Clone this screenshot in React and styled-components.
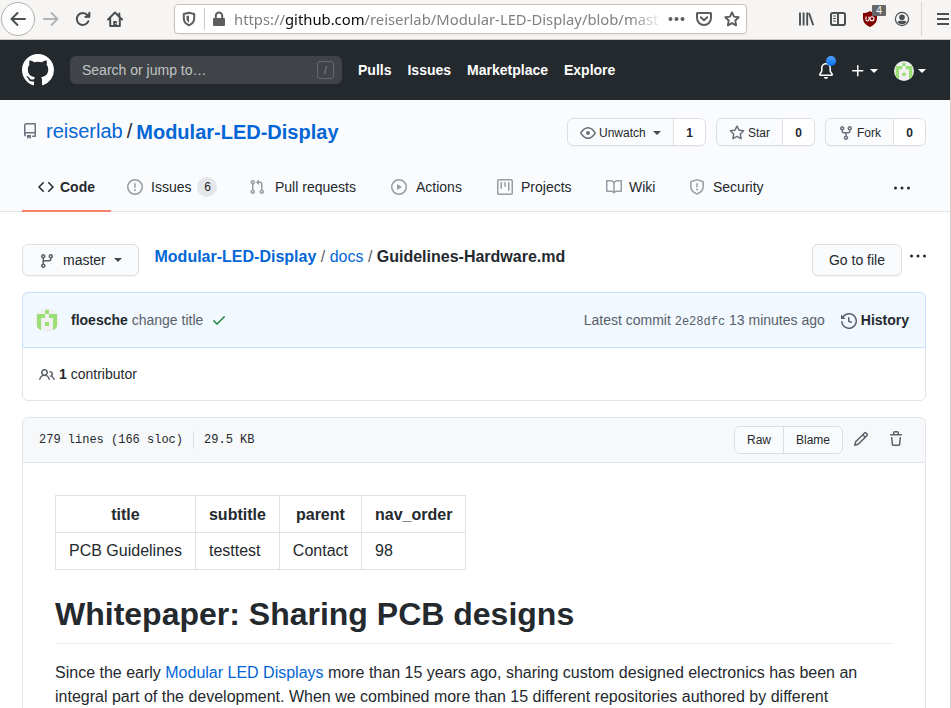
import React from "react";
import styled, { createGlobalStyle } from "styled-components";

const GlobalStyle = createGlobalStyle`
  * { box-sizing: border-box; }
  html, body { margin: 0; padding: 0; background: #fff; overflow: hidden; }
  body {
    font-family: "Liberation Sans", Arial, Helvetica, sans-serif;
    font-size: 14px;
    line-height: 21px;
    color: #24292e;
  }
  svg { display: block; flex: none; }
`;

const paths = {
  github:
    "M8 0C3.58 0 0 3.58 0 8c0 3.54 2.29 6.53 5.47 7.59.4.07.55-.17.55-.38 0-.19-.01-.82-.01-1.49-2.01.37-2.53-.49-2.69-.94-.09-.23-.48-.94-.82-1.13-.28-.15-.68-.52-.01-.53.63-.01 1.08.58 1.23.82.72 1.21 1.87.87 2.33.66.07-.52.28-.87.51-1.07-1.78-.2-3.64-.89-3.64-3.95 0-.87.31-1.59.82-2.15-.08-.2-.36-1.02.08-2.12 0 0 .67-.21 2.2.82.64-.18 1.32-.27 2-.27.68 0 1.36.09 2 .27 1.53-1.04 2.2-.82 2.2-.82.44 1.1.16 1.92.08 2.12.51.56.82 1.27.82 2.15 0 3.07-1.87 3.75-3.65 3.95.29.25.54.73.54 1.48 0 1.07-.01 1.93-.01 2.2 0 .21.15.46.55.38A8.013 8.013 0 0016 8c0-4.42-3.58-8-8-8z",
  repo:
    "M2 2.5A2.5 2.5 0 014.5 0h8.75a.75.75 0 01.75.75v12.5a.75.75 0 01-.75.75h-2.5a.75.75 0 110-1.5h1.75v-2h-8a1 1 0 00-.714 1.7.75.75 0 01-1.072 1.05A2.495 2.495 0 012 11.5v-9zm10.5-1V9h-8c-.356 0-.694.074-1 .208V2.5a1 1 0 011-1h8zM5 12.25v3.25a.25.25 0 00.4.2l1.45-1.087a.25.25 0 01.3 0L8.6 15.7a.25.25 0 00.4-.2v-3.25a.25.25 0 00-.25-.25h-3.5a.25.25 0 00-.25.25z",
  code:
    "M4.72 3.22a.75.75 0 011.06 1.06L2.06 8l3.72 3.72a.75.75 0 11-1.06 1.06L.47 8.53a.75.75 0 010-1.06l4.25-4.25zm6.56 0a.75.75 0 10-1.06 1.06L13.94 8l-3.72 3.72a.75.75 0 101.06 1.06l4.25-4.25a.75.75 0 000-1.06l-4.25-4.25z",
  issue:
    "M8 1.5a6.5 6.5 0 100 13 6.5 6.5 0 000-13zM0 8a8 8 0 1116 0A8 8 0 010 8zm9 3a1 1 0 11-2 0 1 1 0 012 0zm-.25-6.25a.75.75 0 00-1.5 0v3.5a.75.75 0 001.5 0v-3.5z",
  pull:
    "M7.177 3.073L9.573.677A.25.25 0 0110 .854v4.792a.25.25 0 01-.427.177L7.177 3.427a.25.25 0 010-.354zM3.75 2.5a.75.75 0 100 1.5.75.75 0 000-1.5zm-2.25.75a2.25 2.25 0 113 2.122v5.256a2.251 2.251 0 11-1.5 0V5.372A2.25 2.25 0 011.5 3.25zM11 2.5h-1V4h1a1 1 0 011 1v5.628a2.251 2.251 0 101.5 0V5A2.5 2.5 0 0011 2.5zm1 10.25a.75.75 0 111.5 0 .75.75 0 01-1.5 0zM3.75 12a.75.75 0 100 1.5.75.75 0 000-1.5z",
  play:
    "M1.5 8a6.5 6.5 0 1113 0 6.5 6.5 0 01-13 0zM8 0a8 8 0 100 16A8 8 0 008 0zM6.379 5.227A.25.25 0 006 5.442v5.117a.25.25 0 00.379.214l4.264-2.559a.25.25 0 000-.428L6.379 5.227z",
  project:
    "M1.75 0A1.75 1.75 0 000 1.75v12.5C0 15.216.784 16 1.75 16h12.5A1.75 1.75 0 0016 14.25V1.75A1.75 1.75 0 0014.25 0H1.75zM1.5 1.75a.25.25 0 01.25-.25h12.5a.25.25 0 01.25.25v12.5a.25.25 0 01-.25.25H1.75a.25.25 0 01-.25-.25V1.75zM11.75 3a.75.75 0 00-.75.75v7.5a.75.75 0 001.5 0v-7.5a.75.75 0 00-.75-.75zm-8.25.75a.75.75 0 011.5 0v5.5a.75.75 0 01-1.5 0v-5.5zM8 3a.75.75 0 00-.75.75v3.5a.75.75 0 001.5 0v-3.5A.75.75 0 008 3z",
  book:
    "M0 1.75A.75.75 0 01.75 1h4.253c1.227 0 2.317.59 3 1.501A3.744 3.744 0 0111.006 1h4.245a.75.75 0 01.75.75v10.5a.75.75 0 01-.75.75h-4.507a2.25 2.25 0 00-1.591.659l-.622.621a.75.75 0 01-1.06 0l-.622-.621A2.25 2.25 0 005.258 13H.75a.75.75 0 01-.75-.75V1.75zm8.755 3a2.25 2.25 0 012.25-2.25H14.5v9h-3.757c-.71 0-1.4.201-1.992.572l.004-7.322zm-1.504 7.324l.004-5.073-.002-2.253A2.25 2.25 0 005.003 2.5H1.5v9h3.757a3.75 3.75 0 011.994.574z",
  shield:
    "M7.467.133a1.75 1.75 0 011.066 0l5.25 1.68A1.75 1.75 0 0115 3.48V7c0 1.566-.32 3.182-1.303 4.682-.983 1.498-2.585 2.813-5.032 3.855a1.7 1.7 0 01-1.33 0c-2.447-1.042-4.049-2.357-5.032-3.855C1.32 10.182 1 8.566 1 7V3.48a1.75 1.75 0 011.217-1.667l5.25-1.68zm.61 1.429a.25.25 0 00-.153 0l-5.25 1.68a.25.25 0 00-.174.238V7c0 1.358.275 2.666 1.057 3.86.784 1.194 2.121 2.34 4.366 3.297a.2.2 0 00.154 0c2.245-.956 3.582-2.104 4.366-3.298C13.225 9.666 13.5 8.36 13.5 7V3.48a.25.25 0 00-.174-.237l-5.25-1.68zM9 10.5a1 1 0 11-2 0 1 1 0 012 0zm-.25-5.75a.75.75 0 10-1.5 0v3a.75.75 0 001.5 0v-3z",
  eye:
    "M1.679 7.932c.412-.621 1.242-1.75 2.366-2.717C5.175 4.242 6.527 3.5 8 3.5c1.473 0 2.824.742 3.955 1.715 1.124.967 1.954 2.096 2.366 2.717a.119.119 0 010 .136c-.412.621-1.242 1.75-2.366 2.717C10.825 11.758 9.473 12.5 8 12.5c-1.473 0-2.824-.742-3.955-1.715C2.92 9.818 2.09 8.69 1.679 8.068a.119.119 0 010-.136zM8 2c-1.981 0-3.67.992-4.933 2.078C1.797 5.169.88 6.423.43 7.1a1.619 1.619 0 000 1.798c.45.678 1.367 1.932 2.637 3.024C4.329 13.008 6.019 14 8 14c1.981 0 3.67-.992 4.933-2.078 1.27-1.091 2.187-2.345 2.637-3.023a1.619 1.619 0 000-1.798c-.45-.678-1.367-1.932-2.637-3.023C11.671 2.992 9.981 2 8 2zm0 8a2 2 0 100-4 2 2 0 000 4z",
  star:
    "M8 .25a.75.75 0 01.673.418l1.882 3.815 4.21.612a.75.75 0 01.416 1.279l-3.046 2.97.719 4.192a.75.75 0 01-1.088.791L8 12.347l-3.766 1.98a.75.75 0 01-1.088-.79l.72-4.194L.818 6.374a.75.75 0 01.416-1.28l4.21-.611L7.327.668A.75.75 0 018 .25zm0 2.445L6.615 5.5a.75.75 0 01-.564.41l-3.097.45 2.24 2.184a.75.75 0 01.216.664l-.528 3.084 2.769-1.456a.75.75 0 01.698 0l2.77 1.456-.53-3.084a.75.75 0 01.216-.664l2.24-2.183-3.096-.45a.75.75 0 01-.564-.41L8 2.694v.001z",
  fork:
    "M5 3.25a.75.75 0 11-1.5 0 .75.75 0 011.5 0zm0 2.122a2.25 2.25 0 10-1.5 0v.878A2.25 2.25 0 005.75 8.5h1.5v2.128a2.251 2.251 0 101.5 0V8.5h1.5a2.25 2.25 0 002.25-2.25v-.878a2.25 2.25 0 10-1.5 0v.878a.75.75 0 01-.75.75h-4.5A.75.75 0 015 6.25v-.878zm3.75 7.378a.75.75 0 11-1.5 0 .75.75 0 011.5 0zm3-8.75a.75.75 0 100-1.5.75.75 0 000 1.5z",
  branch:
    "M11.75 2.5a.75.75 0 100 1.5.75.75 0 000-1.5zm-2.25.75a2.25 2.25 0 113 2.122V6A2.5 2.5 0 0110 8.5H6a1 1 0 00-1 1v1.128a2.251 2.251 0 11-1.5 0V5.372a2.25 2.25 0 111.5 0v1.836A2.492 2.492 0 016 7h4a1 1 0 001-1v-.628A2.25 2.25 0 019.5 3.25zM4.25 12a.75.75 0 100 1.5.75.75 0 000-1.5zM3.5 3.25a.75.75 0 111.5 0 .75.75 0 01-1.5 0z",
  history:
    "M1.643 3.143L.427 1.927A.25.25 0 000 2.104V5.75c0 .138.112.25.25.25h3.646a.25.25 0 00.177-.427L2.715 4.215a6.5 6.5 0 11-1.18 4.458.75.75 0 10-1.493.154 8.001 8.001 0 101.6-5.684zM7.75 4a.75.75 0 01.75.75v2.992l2.028.812a.75.75 0 01-.557 1.392l-2.5-1A.75.75 0 017 8.25v-3.5A.75.75 0 017.75 4z",
  check:
    "M13.78 4.22a.75.75 0 010 1.06l-7.25 7.25a.75.75 0 01-1.06 0L2.22 9.28a.75.75 0 011.06-1.06L6 10.94l6.72-6.72a.75.75 0 011.06 0z",
  people:
    "M5.5 3.5a2 2 0 100 4 2 2 0 000-4zM2 5.5a3.5 3.5 0 115.898 2.549 5.507 5.507 0 013.034 4.084.75.75 0 11-1.482.235 4.001 4.001 0 00-7.9 0 .75.75 0 01-1.482-.236A5.507 5.507 0 013.102 8.05 3.49 3.49 0 012 5.5zM11 4a.75.75 0 100 1.5 1.5 1.5 0 01.666 2.844.75.75 0 00-.416.672v.352a.75.75 0 00.574.73c1.2.289 2.162 1.2 2.522 2.372a.75.75 0 101.434-.44 5.01 5.01 0 00-2.56-3.012A3 3 0 0011 4z",
  pencil:
    "M11.013 1.427a1.75 1.75 0 012.474 0l1.086 1.086a1.75 1.75 0 010 2.474l-8.61 8.61c-.21.21-.47.364-.756.445l-3.251.93a.75.75 0 01-.927-.928l.929-3.25a1.75 1.75 0 01.445-.758l8.61-8.61zm1.414 1.06a.25.25 0 00-.354 0L10.811 3.75l1.439 1.44 1.263-1.263a.25.25 0 000-.354l-1.086-1.086zM11.189 6.25L9.75 4.81l-6.286 6.287a.25.25 0 00-.064.108l-.558 1.953 1.953-.558a.249.249 0 00.108-.064l6.286-6.286z",
  trash:
    "M6.5 1.75a.25.25 0 01.25-.25h2.5a.25.25 0 01.25.25V3h-3V1.75zm4.5 0V3h2.25a.75.75 0 010 1.5H2.75a.75.75 0 010-1.5H5V1.75C5 .784 5.784 0 6.75 0h2.5C10.216 0 11 .784 11 1.75zM4.496 6.675a.75.75 0 10-1.492.15l.66 6.6A1.75 1.75 0 005.405 15h5.19c.9 0 1.652-.681 1.741-1.576l.66-6.6a.75.75 0 00-1.492-.149l-.66 6.6a.25.25 0 01-.249.225h-5.19a.25.25 0 01-.249-.225l-.66-6.6z",
  bell:
    "M8 16a2 2 0 001.985-1.75c.017-.137-.097-.25-.235-.25h-3.5c-.138 0-.252.113-.235.25A2 2 0 008 16zM8 1.5A3.5 3.5 0 004.5 5v2.947c0 .346-.102.683-.294.97l-1.703 2.556a.018.018 0 00-.003.01l.001.006c0 .002.002.004.004.006a.017.017 0 00.006.004l.007.001h10.964l.007-.001a.016.016 0 00.006-.004.016.016 0 00.004-.006l.001-.007a.017.017 0 00-.003-.01l-1.703-2.554a1.75 1.75 0 01-.294-.97V5A3.5 3.5 0 008 1.5zM3 5a5 5 0 0110 0v2.947c0 .05.015.098.042.139l1.703 2.555A1.518 1.518 0 0113.482 13H2.518a1.518 1.518 0 01-1.263-2.36l1.703-2.554A.25.25 0 003 7.947V5z",
  plus:
    "M7.75 2a.75.75 0 01.75.75V7h4.25a.75.75 0 110 1.5H8.5v4.25a.75.75 0 11-1.5 0V8.5H2.75a.75.75 0 010-1.5H7V2.75A.75.75 0 017.75 2z",
};

const Octicon = ({ name, size = 16, color = "currentColor" }) => (
  <svg width={size} height={size} viewBox="0 0 16 16" fill={color}>
    <path fillRule="evenodd" clipRule="evenodd" d={paths[name]} />
  </svg>
);

const Dots = ({ color = "#24292e" }) => (
  <svg width="16" height="16" viewBox="0 0 16 16" fill={color}>
    <circle cx="1.5" cy="8" r="1.5" />
    <circle cx="8" cy="8" r="1.5" />
    <circle cx="14.5" cy="8" r="1.5" />
  </svg>
);

const Caret = styled.span`
  flex: none;
  width: 0;
  height: 0;
  border: 4px solid transparent;
  border-top-color: ${(p) => p.$color || "#444a50"};
  border-bottom: 0;
  margin-left: ${(p) => p.$gap || 0}px;
`;

const Identicon = ({ size }) => (
  <svg width={size} height={size} viewBox="0 0 24 24">
    <defs>
      <clipPath id={`round${size}`}>
        <circle cx="12" cy="12" r="12" />
      </clipPath>
    </defs>
    <g clipPath={`url(#round${size})`}>
      <rect width="24" height="24" fill="#f0f0f0" />
      <path
        fill="#9ade76"
        d="M10 2h4v4h-4zM2 6h8v4H6v12H2zM14 6h8v16h-4V10h-4zM10 14h4v4h-4z"
      />
    </g>
  </svg>
);

/* ---------- browser chrome ---------- */

const Window = styled.div`
  width: 951px;
  height: 708px;
  display: flex;
  flex-direction: column;
  overflow: hidden;
`;

const BrowserBar = styled.div`
  flex: none;
  display: flex;
  align-items: center;
  height: 40px;
  padding-bottom: 2px;
  background: #f6f5f4;
  border-bottom: 1px solid #cdc7c2;
  color: #4a4f52;
`;

const BackButton = styled.div`
  flex: none;
  display: flex;
  align-items: center;
  justify-content: center;
  width: 34px;
  height: 34px;
  margin-left: 1px;
  border: 1px solid #aeaeac;
  border-radius: 50%;
  background: #fdfdfd;
`;

const BarIcon = styled.div`
  flex: none;
  display: flex;
  position: relative;
  margin-left: ${(p) => p.$gap}px;
  color: ${(p) => p.$color || "inherit"};
`;

const UrlBar = styled.div`
  flex: none;
  display: flex;
  align-items: center;
  width: 573px;
  height: 30px;
  margin-left: 51px;
  border: 1px solid #c9c2bc;
  border-radius: 4px;
  background: #fff;
  color: #5d5d5d;
  box-shadow: 0 1px 2px rgba(0, 0, 0, 0.06);
`;

const UrlDivider = styled.div`
  width: 1px;
  height: 22px;
  margin: 0 8px 0 7px;
  background: #c9c9c9;
`;

const Url = styled.div`
  width: 425px;
  margin-left: 9px;
  white-space: nowrap;
  font: 14.8px/24px "Noto Sans", sans-serif;
  color: #808080;
  mask-image: linear-gradient(to right, #000 396px, transparent 430px);
  b { font-weight: 400; color: #0c0c0d; }
`;

const BlockBadge = styled.span`
  position: absolute;
  left: 9px;
  top: -6px;
  width: 14px;
  height: 11px;
  border-radius: 1px;
  background: #666;
  color: #fff;
  font: 10px/11px "Noto Sans", sans-serif;
  text-align: center;
`;

const BarDivider = styled.div`
  width: 1px;
  height: 34px;
  margin-left: 11px;
  background: #d9d6d2;
`;

const stroke = {
  fill: "none",
  stroke: "currentColor",
  strokeWidth: 2,
  strokeLinecap: "round",
  strokeLinejoin: "round",
};

const Browser = () => (
  <BrowserBar>
    <BackButton>
      <svg width="16" height="16" viewBox="0 0 16 16" {...stroke}>
        <path d="M15 8H1.500M7.500 2l-6 6 6 6" />
      </svg>
    </BackButton>
    <BarIcon $gap={8} $color="#b3b5b5">
      <svg width="16" height="16" viewBox="0 0 16 16" {...stroke}>
        <path d="M1 8h13.500M8.500 2l6 6-6 6" />
      </svg>
    </BarIcon>
    <BarIcon $gap={16}>
      <svg width="16" height="16" viewBox="0 0 16 16" {...stroke}>
        <path d="M13.400 10.200A6 6 0 1 1 12.500 4.200" />
        <path d="M15 1v5.500H9.500z" fill="currentColor" stroke="none" />
        <path d="M14.400 1.800v4h-4" />
      </svg>
    </BarIcon>
    <BarIcon $gap={16}>
      <svg width="16" height="16" viewBox="0 0 16 16" {...stroke}>
        <path d="M1 8.500l7-7 7 7M3.200 7.500V15h9.600V7.500" />
        <path d="M6.200 15v-5h3.600v5z" fill="currentColor" stroke="none" />
        <path d="M12.300 2.500v3" />
        <circle cx="8.700" cy="12.500" r=".6" fill="#fff" stroke="none" />
      </svg>
    </BarIcon>
    <UrlBar>
      <BarIcon $gap={6}>
        <svg width="16" height="16" viewBox="0 0 16 16" {...stroke}>
          <path d="M8 1.800L13.200 3v4.500c0 3-2 5.500-5.200 6.800-3.200-1.300-5.200-3.800-5.200-6.800V3z" />
          <path d="M8 4.500v7c-1.700-1-2.500-2.400-2.500-4V5z" fill="currentColor" stroke="none" />
        </svg>
      </BarIcon>
      <UrlDivider />
      <svg width="12" height="16" viewBox="0 0 12 16">
        <rect x="0" y="7" width="12" height="8" rx="1.200" fill="currentColor" />
        <path d="M2.800 8V4.800a3.200 3.200 0 016.400 0V8" {...stroke} />
      </svg>
      <Url>
        https://<b>github.com</b>/reiserlab/Modular-LED-Display/blob/maste
      </Url>
      <BarIcon $gap={9}>
        <svg width="17" height="16" viewBox="0 0 17 16" fill="currentColor">
          <circle cx="2.500" cy="8" r="2" />
          <circle cx="8.500" cy="8" r="2" />
          <circle cx="14.500" cy="8" r="2" />
        </svg>
      </BarIcon>
      <BarIcon $gap={11}>
        <svg width="16" height="16" viewBox="0 0 16 16" {...stroke}>
          <path d="M1.500 2h13a.5.5 0 01.5.500V7A7 7 0 011 7V2.500a.5.5 0 01.5-.5z" />
          <path d="M4.800 6.200L8 9.200l3.200-3" />
        </svg>
      </BarIcon>
      <BarIcon $gap={12}>
        <svg width="16" height="16" viewBox="0 0 16 16" {...stroke} strokeWidth="1.900">
          <path d="M8 1.300l2 4.300 4.700.6-3.400 3.300.8 4.900L8 12.100l-4.100 2.300.8-4.900L1.300 6.200 6 5.600z" />
        </svg>
      </BarIcon>
    </UrlBar>
    <BarIcon $gap={51}>
      <svg width="16" height="16" viewBox="0 0 16 16" {...stroke} strokeLinecap="butt">
        <path d="M2 1.500v13M5.600 1.500v13M9.200 1.500v13M11 2l4.300 12.300" strokeWidth="1.900" />
      </svg>
    </BarIcon>
    <BarIcon $gap={16}>
      <svg width="16" height="16" viewBox="0 0 16 16" {...stroke}>
        <rect x="1" y="2" width="14" height="12" rx="1.800" />
        <path d="M8 2v12" />
        <path d="M3.500 5h2M3.500 7.500h2M3.500 10h2" strokeWidth="1" />
      </svg>
    </BarIcon>
    <BarIcon $gap={17}>
      <svg width="14" height="16" viewBox="0 0 14 16">
        <path d="M7 0c2 1.600 4.400 2 7 2v5c0 4.500-3 7.300-7 9-4-1.700-7-4.500-7-9V2c2.600 0 5-.4 7-2z" fill="#800000" />
        <path d="M3 5.500v3q0 1.500 1.500 1.500T6 8.500v-3" fill="none" stroke="#fff" strokeWidth="1.100" />
        <circle cx="9" cy="7.800" r="2" fill="none" stroke="#fff" strokeWidth="1.100" />
      </svg>
      <BlockBadge>4</BlockBadge>
    </BarIcon>
    <BarIcon $gap={17}>
      <svg width="16" height="16" viewBox="0 0 16 16">
        <circle cx="8" cy="8" r="6.600" fill="none" stroke="currentColor" strokeWidth="1.200" />
        <circle cx="8" cy="6.300" r="2.800" fill="currentColor" />
        <path d="M3.500 11c1-1.500 2.500-1.300 4.500-1.300s3.500-.2 4.500 1.300c-1 1.500-2.500 2.300-4.500 2.300S4.500 12.500 3.500 11z" fill="currentColor" />
      </svg>
    </BarIcon>
    <BarDivider />
    <BarIcon $gap={15}>
      <svg width="14" height="16" viewBox="0 0 14 16" {...stroke} strokeLinecap="butt">
        <path d="M0 3h12M0 8h12M0 13h12" />
      </svg>
    </BarIcon>
  </BrowserBar>
);

/* ---------- site header ---------- */

const Page = styled.div`
  flex: 1;
  min-height: 0;
  overflow: hidden;
  border-right: 1px solid #d5d0cc;
`;

const SiteHeader = styled.header`
  display: flex;
  align-items: center;
  height: 60px;
  padding: 0 24px 0 22px;
  background: #24292e;
  color: #fff;
`;

const Search = styled.div`
  display: flex;
  align-items: center;
  justify-content: space-between;
  width: 272px;
  height: 28px;
  margin-left: 16px;
  padding: 0 8px 0 12px;
  border-radius: 6px;
  background: #404448;
  color: #c2c4c6;
`;

const SlashKey = styled.span`
  width: 17px;
  height: 18px;
  border: 1px solid #65696d;
  border-radius: 3px;
  color: #84878a;
  font-size: 11px;
  line-height: 16px;
  text-align: center;
`;

const MainNav = styled.nav`
  display: flex;
  gap: 16px;
  margin: 0 auto 0 16px;
  font-weight: 700;
`;

const Bell = styled.div`
  position: relative;
  margin-right: 16px;
  padding-top: 2px;
`;

const UnreadDot = styled.span`
  position: absolute;
  left: 8px;
  top: -5px;
  width: 10px;
  height: 10px;
  border-radius: 50%;
  background: linear-gradient(#54a3ff, #006eed);
`;

const HeaderMenu = styled.div`
  display: flex;
  align-items: center;
  padding-top: 2px;
  margin-right: ${(p) => p.$after || 0}px;
`;

/* ---------- repository heading ---------- */

const RepoHead = styled.section`
  display: flex;
  flex-direction: column;
  height: 112px;
  padding: 18px 24px 0 22px;
  background: #fafbfc;
  border-bottom: 1px solid #e1e4e8;
`;

const RepoRow = styled.div`
  flex: none;
  display: flex;
  align-items: flex-start;
  justify-content: space-between;
  height: 44px;
`;

const RepoTitle = styled.h1`
  display: flex;
  align-items: center;
  margin: 0;
  height: 27px;
  font-size: 20px;
  font-weight: 400;
  color: #6a737d;
  > svg { margin-bottom: 2px; }
`;

const Link = styled.a`
  color: #0366d6;
  font-weight: ${(p) => (p.$bold ? 700 : 400)};
`;

const TitleOwner = styled(Link)`
  margin-left: 8px;
`;

const TitleRepo = styled(Link)`
  padding-top: 2px;
`;

const TitleSlash = styled.span`
  margin: 0 4px;
  color: #24292e;
`;

const SocialActions = styled.div`
  display: flex;
  gap: 10px;
`;

const SplitButton = styled.div`
  display: flex;
  height: 28px;
  border: 1px solid #dcdee1;
  border-radius: 6px;
  background: #fafbfc;
  box-shadow: 0 1px 0 rgba(27, 31, 35, 0.04);
  font-size: 12px;
  line-height: 20px;
  overflow: hidden;
`;

const SplitMain = styled.span`
  display: flex;
  align-items: center;
  width: ${(p) => p.$width}px;
  padding: 1px 0 0 12px;
  gap: 3px;
  svg { color: #6a737d; }
`;

const SplitCount = styled.span`
  display: flex;
  align-items: center;
  justify-content: center;
  width: 32px;
  padding-top: 1px;
  border-left: 1px solid #dcdee1;
  background: #fff;
  font-weight: 700;
`;

const Tabs = styled.nav`
  flex: none;
  display: flex;
  height: 50px;
`;

const Tab = styled.a`
  display: flex;
  align-items: center;
  flex: none;
  width: ${(p) => p.$width}px;
  padding: 2px 0 0 ${(p) => p.$pad || 0}px;
  gap: ${(p) => p.$gap}px;
  margin-right: ${(p) => p.$after || 0}px;
  border-bottom: 2px solid ${(p) => (p.$active ? "#f9826c" : "transparent")};
  font-weight: ${(p) => (p.$active ? 700 : 400)};
  white-space: nowrap;
  svg { color: ${(p) => (p.$active ? "#24292e" : "#959da5")}; }
`;

const Counter = styled.span`
  min-width: 20px;
  height: 20px;
  margin-left: -2px;
  border-radius: 10px;
  background: #e4e6e9;
  font-size: 12px;
  line-height: 21px;
  text-align: center;
`;

const TabOverflow = styled.div`
  display: flex;
  align-items: center;
  margin-left: auto;
  padding: 1px 16px 0 0;
`;

/* ---------- file area ---------- */

const Main = styled.main`
  padding: 32px 24px 0 22px;
`;

const FileNav = styled.div`
  display: flex;
  align-items: flex-start;
  height: 48px;
`;

const Button = styled.button`
  display: flex;
  align-items: center;
  height: 32px;
  padding: 0 16px;
  border: 1px solid #dcdee1;
  border-radius: 6px;
  background: #fafbfc;
  box-shadow: 0 1px 0 rgba(27, 31, 35, 0.04);
  color: #24292e;
  font: 14px/20px "Liberation Sans", Arial, sans-serif;
  white-space: nowrap;
`;

const BranchButton = styled(Button)`
  width: 117px;
  gap: 8px;
  svg { color: #586069; margin-top: 2px; }
`;

const Breadcrumb = styled.div`
  margin: 1px 0 0 15.5px;
  font-size: 16px;
  line-height: 24px;
  color: #586069;
  strong { color: #24292e; }
`;

const FileActions = styled.div`
  display: flex;
  align-items: flex-start;
  gap: 8px;
  margin-left: auto;
`;

const MoreLink = styled.span`
  display: flex;
  height: 23px;
  align-items: center;
`;

const CommitBox = styled.section`
  border: 1px solid #e1e4e8;
  border-radius: 6px;
  height: 109px;
`;

const CommitRow = styled.div`
  display: flex;
  align-items: center;
  height: 56px;
  margin: -1px -1px 0;
  padding: 0 16px 0 12px;
  border: 1px solid #c8e1ff;
  border-radius: 6px 6px 0 0;
  background: #f1f8ff;
  color: #586069;
`;

const CommitMessage = styled.span`
  margin: 0 8px 0 12px;
  b { color: #24292e; }
`;

const CommitMeta = styled.span`
  margin-left: auto;
  code { font: 12px "Liberation Mono", monospace; }
`;

const HistoryLink = styled.a`
  display: flex;
  align-items: center;
  gap: 4px;
  margin-left: 16px;
  b { color: #24292e; }
  svg { margin-top: 1px; }
`;

const Contributors = styled.div`
  display: flex;
  align-items: center;
  height: 52px;
  padding-left: 16px;
  gap: 4px;
  svg { color: #586069; margin-top: 1px; }
`;

const FileBox = styled.section`
  height: 320px;
  margin-top: 16px;
  border: 1px solid #e1e4e8;
  border-radius: 6px 6px 0 0;
`;

const FileHeader = styled.div`
  display: flex;
  align-items: center;
  height: 45px;
  padding: 0 21px 0 16px;
  border-bottom: 1px solid #e1e4e8;
  border-radius: 6px 6px 0 0;
  background: #f6f8fa;
`;

const FileInfo = styled.div`
  display: flex;
  align-items: center;
  margin-right: auto;
  font: 12px/18px "Liberation Mono", monospace;
`;

const InfoDivider = styled.span`
  width: 1px;
  height: 18px;
  margin: 0 10px;
  background: #dcdfe3;
`;

const ButtonGroup = styled.div`
  display: flex;
  height: 28px;
  border: 1px solid #dcdee1;
  border-radius: 6px;
  background: #fafbfc;
  font-size: 12px;
  line-height: 26px;
`;

const GroupItem = styled.a`
  padding: 0 12px;
  & + & { border-left: 1px solid #dcdee1; }
`;

const FileTool = styled.span`
  margin-left: ${(p) => p.$gap}px;
  padding-bottom: 2px;
  color: #586069;
`;

const Markdown = styled.article`
  padding: 32px;
  font-size: 16px;
  line-height: 24px;
`;

const Table = styled.table`
  border-collapse: collapse;
  td, th {
    height: 37px;
    padding: 6px 13px;
    border: 1px solid #dfe2e5;
  }
  th { padding: 7px 13px 5px; }
`;

const DocTitle = styled.h1`
  margin: 24px 0 17px;
  padding-bottom: 9px;
  border-bottom: 1px solid #eaecef;
  font-size: 32px;
  line-height: 40px;
`;

const Paragraph = styled.p`
  margin: 0;
  white-space: nowrap;
`;

const tabs = [
  { icon: "issue", label: "Issues", width: 122, gap: 8, count: 6 },
  { icon: "pull", label: "Pull requests", width: 142, gap: 10 },
  { icon: "play", label: "Actions", width: 106, gap: 9 },
  { icon: "project", label: "Projects", width: 109, gap: 8 },
  { icon: "book", label: "Wiki", width: 83, gap: 7 },
  { icon: "shield", label: "Security", width: 80, gap: 8 },
];

const SocialButton = ({ icon, label, count, width, caret }) => (
  <SplitButton>
    <SplitMain $width={width}>
      <Octicon name={icon} />
      {label}
      {caret && <Caret $gap={4} />}
    </SplitMain>
    <SplitCount>{count}</SplitCount>
  </SplitButton>
);

export default function App() {
  return (
    <Window>
      <GlobalStyle />
      <Browser />
      <Page>
        <SiteHeader>
          <Octicon name="github" size={32} />
          <Search>
            Search or jump to…
            <SlashKey>/</SlashKey>
          </Search>
          <MainNav>
            <span>Pulls</span>
            <span>Issues</span>
            <span>Marketplace</span>
            <span>Explore</span>
          </MainNav>
          <Bell>
            <Octicon name="bell" />
            <UnreadDot />
          </Bell>
          <HeaderMenu $after={16}>
            <Octicon name="plus" />
            <Caret $color="#fff" $gap={4} />
          </HeaderMenu>
          <HeaderMenu>
            <Identicon size={20} />
            <Caret $color="#fff" $gap={4} />
          </HeaderMenu>
        </SiteHeader>

        <RepoHead>
          <RepoRow>
            <RepoTitle>
              <Octicon name="repo" />
              <TitleOwner>reiserlab</TitleOwner>
              <TitleSlash>/</TitleSlash>
              <TitleRepo $bold>Modular-LED-Display</TitleRepo>
            </RepoTitle>
            <SocialActions>
              <SocialButton icon="eye" label="Unwatch" count={1} width={105} caret />
              <SocialButton icon="star" label="Star" count={0} width={65} />
              <SocialButton icon="fork" label="Fork" count={0} width={67} />
            </SocialActions>
          </RepoRow>
          <Tabs>
            <Tab $active $width={89} $pad={16} $gap={6} $after={16}>
              <Octicon name="code" />
              Code
            </Tab>
            {tabs.map((t) => (
              <Tab key={t.label} $width={t.width} $gap={t.gap}>
                <Octicon name={t.icon} />
                {t.label}
                {t.count && <Counter>{t.count}</Counter>}
              </Tab>
            ))}
            <TabOverflow>
              <Dots />
            </TabOverflow>
          </Tabs>
        </RepoHead>

        <Main>
          <FileNav>
            <BranchButton>
              <Octicon name="branch" />
              master
              <Caret />
            </BranchButton>
            <Breadcrumb>
              <Link $bold>Modular-LED-Display</Link> / <Link>docs</Link> /{" "}
              <strong>Guidelines-Hardware.md</strong>
            </Breadcrumb>
            <FileActions>
              <Button>Go to file</Button>
              <MoreLink>
                <Dots />
              </MoreLink>
            </FileActions>
          </FileNav>

          <CommitBox>
            <CommitRow>
              <Identicon size={24} />
              <CommitMessage>
                <b>floesche</b> change title
              </CommitMessage>
              <Octicon name="check" color="#22863a" />
              <CommitMeta>
                Latest commit <code>2e28dfc</code> 13 minutes ago
              </CommitMeta>
              <HistoryLink>
                <Octicon name="history" />
                <b>History</b>
              </HistoryLink>
            </CommitRow>
            <Contributors>
              <Octicon name="people" />
              <span>
                <b>1</b> contributor
              </span>
            </Contributors>
          </CommitBox>

          <FileBox>
            <FileHeader>
              <FileInfo>
                279 lines (166 sloc)
                <InfoDivider />
                29.5 KB
              </FileInfo>
              <ButtonGroup>
                <GroupItem>Raw</GroupItem>
                <GroupItem>Blame</GroupItem>
              </ButtonGroup>
              <FileTool $gap={10}>
                <Octicon name="pencil" />
              </FileTool>
              <FileTool $gap={19}>
                <Octicon name="trash" />
              </FileTool>
            </FileHeader>
            <Markdown>
              <Table>
                <thead>
                  <tr>
                    <th>title</th>
                    <th>subtitle</th>
                    <th>parent</th>
                    <th>nav_order</th>
                  </tr>
                </thead>
                <tbody>
                  <tr>
                    <td>PCB Guidelines</td>
                    <td>testtest</td>
                    <td>Contact</td>
                    <td>98</td>
                  </tr>
                </tbody>
              </Table>
              <DocTitle>Whitepaper: Sharing PCB designs</DocTitle>
              <Paragraph>
                Since the early <Link>Modular LED Displays</Link> more than 15 years ago, sharing
                custom designed electronics has been an
                <br />
                integral part of the development. When we combined more than 15 different
                repositories authored by different
              </Paragraph>
            </Markdown>
          </FileBox>
        </Main>
      </Page>
    </Window>
  );
}
